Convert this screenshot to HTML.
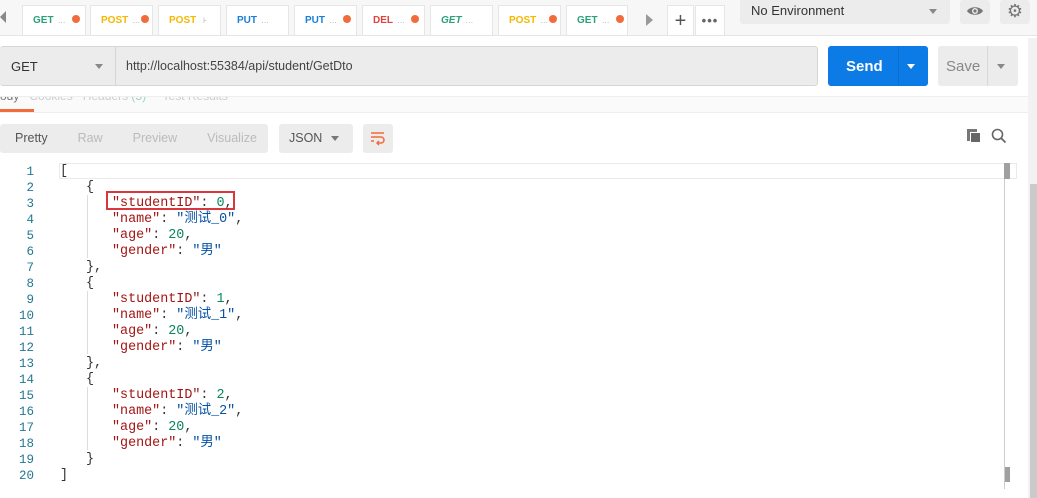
<!DOCTYPE html>
<html><head><meta charset="utf-8"><style>
*{box-sizing:border-box;margin:0;padding:0}
body{width:1037px;height:498px;overflow:hidden;background:#fff;font-family:"Liberation Sans","Noto Sans CJK SC",sans-serif;position:relative}
.a{position:absolute}
.tab{position:absolute;top:5px;height:30px;background:#fff;border:1px solid #e6e6e6;border-bottom:none;font-size:10px;font-weight:bold;line-height:30px;padding-left:10px;white-space:nowrap;overflow:hidden}
.dot{display:inline-block;width:8px;height:8px;border-radius:50%;background:#f26b3a;margin-left:6px;vertical-align:0}
.el{color:#aaa;font-weight:normal;margin-left:4px;font-size:8px}
.code{font-family:"Liberation Mono","Noto Sans CJK SC",monospace;font-size:13.4px;line-height:16px}
.k{color:#a31515}.s{color:#0451a5}.n{color:#098658}.p{color:#333}
.ln{position:absolute;left:0;width:34px;text-align:right;color:#237893;font-size:12.5px}
</style></head><body>
<div class="a" style="left:0;top:0;width:1037px;height:36px;background:#f7f7f7;border-bottom:1px solid #e5e5e5"></div>
<div class="a" style="left:0;top:11px;width:0;height:0;border-top:6px solid transparent;border-bottom:6px solid transparent;border-right:6px solid #888"></div>
<div class="tab" style="left:22px;width:64px;color:#2ba07b">GET<span class="el">…</span><span class="dot"></span></div>
<div class="tab" style="left:90px;width:63px;color:#f5b800">POST<span class="el">…</span><span class="dot" style="margin-left:1px"></span></div>
<div class="tab" style="left:158px;width:63px;color:#f5b800">POST <span class="el">⊦</span></div>
<div class="tab" style="left:226px;width:63px;color:#1c7ed6">PUT<span class="el">…</span></div>
<div class="tab" style="left:294px;width:63px;color:#1c7ed6">PUT<span class="el">…</span><span class="dot"></span></div>
<div class="tab" style="left:362px;width:63px;color:#e5413c">DEL<span class="el">…</span><span class="dot"></span></div>
<div class="tab" style="left:430px;width:63px;color:#2ba07b;font-style:italic">GET<span class="el">…</span></div>
<div class="tab" style="left:498px;width:63px;color:#f5b800">POST<span class="el">…</span><span class="dot" style="margin-left:1px"></span></div>
<div class="tab" style="left:566px;width:62px;color:#2ba07b">GET<span class="el">…</span><span class="dot"></span></div>
<div class="a" style="left:646px;top:14px;width:0;height:0;border-top:6px solid transparent;border-bottom:6px solid transparent;border-left:7px solid #999"></div>
<div class="tab" style="left:667px;width:27px;padding:0;text-align:center;font-size:20px;font-weight:normal;color:#555">+</div>
<div class="tab" style="left:695px;width:30px;padding:0;text-align:center;font-size:13px;color:#666;letter-spacing:1px">•••</div>
<div class="a" style="left:740px;top:0;width:210px;height:24px;background:#ececec;border-radius:0 0 3px 3px;font-size:13px;color:#333;line-height:22px;padding-left:11px">No Environment</div>
<div class="a" style="left:929px;top:9px;border-left:4px solid transparent;border-right:4px solid transparent;border-top:5px solid #888"></div>
<div class="a" style="left:960px;top:0;width:30px;height:24px;background:#ececec;border-radius:3px"></div>
<svg class="a" style="left:966px;top:4px" width="18" height="14"><path d="M1 7C4 2 14 2 17 7C14 12 4 12 1 7Z" fill="#777"/><circle cx="9" cy="7" r="3" fill="#ececec"/><circle cx="9" cy="7" r="1.6" fill="#777"/></svg>
<div class="a" style="left:1000px;top:0;width:30px;height:24px;background:#ececec;border-radius:3px;color:#777;font-size:18px;text-align:center;line-height:22px">⚙</div>
<div class="a" style="left:1028px;top:38px;width:9px;height:460px;background:#f2f2f2"></div>
<div class="a" style="left:1030px;top:184px;width:7px;height:314px;background:#cacaca"></div>
<div class="a" style="left:0;top:46px;width:818px;height:40px;background:#ececec;border:1px solid #d6d6d6;border-left:none;border-radius:3px"></div>
<div class="a" style="left:115px;top:46px;width:1px;height:40px;background:#d6d6d6"></div>
<div class="a" style="left:11px;top:59px;font-size:13px;color:#333">GET</div>
<div class="a" style="left:95px;top:64px;border-left:4px solid transparent;border-right:4px solid transparent;border-top:5px solid #888"></div>
<div class="a" style="left:126px;top:59px;font-size:12.5px;color:#444">http://localhost:55384/api/student/GetDto</div>
<div class="a" style="left:828px;top:46px;width:100px;height:40px;background:#0c7be6;border-radius:3px"></div>
<div class="a" style="left:898px;top:46px;width:1px;height:40px;background:#0a6fd0"></div>
<div class="a" style="left:846px;top:58px;font-size:15px;font-weight:bold;color:#fff">Send</div>
<div class="a" style="left:907px;top:64px;border-left:4px solid transparent;border-right:4px solid transparent;border-top:5px solid #fff"></div>
<div class="a" style="left:938px;top:46px;width:80px;height:40px;background:#ececec;border-radius:3px"></div>
<div class="a" style="left:987px;top:46px;width:1px;height:40px;background:#d8d8d8"></div>
<div class="a" style="left:946px;top:58px;font-size:15px;color:#888">Save</div>
<div class="a" style="left:997px;top:64px;border-left:4px solid transparent;border-right:4px solid transparent;border-top:5px solid #888"></div>
<div class="a" style="left:0;top:96px;width:1028px;height:17px;background:#fafafa;border-top:1px solid #eee;border-bottom:1px solid #eee;overflow:hidden">
<div class="a" style="left:0;top:-8px;font-size:12px;color:#777;white-space:nowrap">ody &nbsp; <span style="color:#ccc">Cookies &nbsp; Headers <span style="color:#9cd4b8">(5)</span> &nbsp;&nbsp;&nbsp; Test Results</span></div></div>
<div class="a" style="left:0;top:109px;width:34px;height:3px;background:#f26b3a"></div>
<div class="a" style="left:0;top:124px;width:268px;height:29px;background:#ececec;border-radius:3px;font-size:12.5px;line-height:29px;color:#bbb;white-space:nowrap"><span style="color:#555;margin-left:15px">Pretty</span><span style="margin-left:30px">Raw</span><span style="margin-left:30px">Preview</span><span style="margin-left:30px">Visualize</span></div>
<div class="a" style="left:279px;top:124px;width:74px;height:29px;background:#ececec;border-radius:3px;font-size:12.5px;line-height:29px;color:#555;padding-left:10px">JSON</div>
<div class="a" style="left:331px;top:136px;border-left:4px solid transparent;border-right:4px solid transparent;border-top:5px solid #777"></div>
<div class="a" style="left:363px;top:124px;width:30px;height:29px;background:#ececec;border-radius:3px"></div>
<svg class="a" style="left:369px;top:130px" width="18" height="16" viewBox="0 0 18 16"><path d="M2 3h13M2 7h10a3 3 0 0 1 0 6H8M10 11l-2 2 2 2M2 11h3" stroke="#f26b3a" stroke-width="1.5" fill="none"/></svg>
<div class="a" style="left:967px;top:129px;width:10px;height:12px;background:#777"></div>
<div class="a" style="left:970px;top:132px;width:11px;height:11px;background:#666;border:1px solid #fff"></div>
<svg class="a" style="left:991px;top:128px" width="16" height="16"><circle cx="6.5" cy="6.5" r="5" stroke="#666" stroke-width="1.6" fill="none"/><path d="M10 10l4.5 4.5" stroke="#666" stroke-width="1.8"/></svg>
<div class="a" style="left:59px;top:163px;width:958px;height:16px;border:1px solid #eaeaea"></div>
<div class="a" style="left:1004px;top:163px;width:6px;height:16px;background:#a0a0a0"></div>
<div class="a" style="left:1004px;top:467px;width:6px;height:15px;background:#a0a0a0"></div>
<div class="a" style="left:1004px;top:179px;width:1px;height:310px;background:#ccc"></div>
<div class="a" style="left:87px;top:195px;width:1px;height:63px;background:#ddd"></div>
<div class="a" style="left:87px;top:291px;width:1px;height:63px;background:#ddd"></div>
<div class="a" style="left:87px;top:387px;width:1px;height:63px;background:#ddd"></div>
<div class="a" style="left:106px;top:191px;width:129px;height:19px;border:2px solid #d9363e"></div>
<div class="a code" style="left:0;top:164px;width:1000px">
<div style="position:relative;height:16px"><span class="ln">1</span><span class="a p" style="left:60px">[</span></div>
<div style="position:relative;height:16px"><span class="ln">2</span><span class="a p" style="left:86px">{</span></div>
<div style="position:relative;height:16px"><span class="ln">3</span><span class="a" style="left:112px"><span class="k">"studentID"</span><span class="p">: </span><span class="n">0</span><span class="p">,</span></span></div>
<div style="position:relative;height:16px"><span class="ln">4</span><span class="a" style="left:112px"><span class="k">"name"</span><span class="p">: </span><span class="s">"测试_0"</span><span class="p">,</span></span></div>
<div style="position:relative;height:16px"><span class="ln">5</span><span class="a" style="left:112px"><span class="k">"age"</span><span class="p">: </span><span class="n">20</span><span class="p">,</span></span></div>
<div style="position:relative;height:16px"><span class="ln">6</span><span class="a" style="left:112px"><span class="k">"gender"</span><span class="p">: </span><span class="s">"男"</span></span></div>
<div style="position:relative;height:16px"><span class="ln">7</span><span class="a p" style="left:86px">},</span></div>
<div style="position:relative;height:16px"><span class="ln">8</span><span class="a p" style="left:86px">{</span></div>
<div style="position:relative;height:16px"><span class="ln">9</span><span class="a" style="left:112px"><span class="k">"studentID"</span><span class="p">: </span><span class="n">1</span><span class="p">,</span></span></div>
<div style="position:relative;height:16px"><span class="ln">10</span><span class="a" style="left:112px"><span class="k">"name"</span><span class="p">: </span><span class="s">"测试_1"</span><span class="p">,</span></span></div>
<div style="position:relative;height:16px"><span class="ln">11</span><span class="a" style="left:112px"><span class="k">"age"</span><span class="p">: </span><span class="n">20</span><span class="p">,</span></span></div>
<div style="position:relative;height:16px"><span class="ln">12</span><span class="a" style="left:112px"><span class="k">"gender"</span><span class="p">: </span><span class="s">"男"</span></span></div>
<div style="position:relative;height:16px"><span class="ln">13</span><span class="a p" style="left:86px">},</span></div>
<div style="position:relative;height:16px"><span class="ln">14</span><span class="a p" style="left:86px">{</span></div>
<div style="position:relative;height:16px"><span class="ln">15</span><span class="a" style="left:112px"><span class="k">"studentID"</span><span class="p">: </span><span class="n">2</span><span class="p">,</span></span></div>
<div style="position:relative;height:16px"><span class="ln">16</span><span class="a" style="left:112px"><span class="k">"name"</span><span class="p">: </span><span class="s">"测试_2"</span><span class="p">,</span></span></div>
<div style="position:relative;height:16px"><span class="ln">17</span><span class="a" style="left:112px"><span class="k">"age"</span><span class="p">: </span><span class="n">20</span><span class="p">,</span></span></div>
<div style="position:relative;height:16px"><span class="ln">18</span><span class="a" style="left:112px"><span class="k">"gender"</span><span class="p">: </span><span class="s">"男"</span></span></div>
<div style="position:relative;height:16px"><span class="ln">19</span><span class="a p" style="left:86px">}</span></div>
<div style="position:relative;height:16px"><span class="ln">20</span><span class="a p" style="left:60px">]</span></div>
</div>
</body></html>
